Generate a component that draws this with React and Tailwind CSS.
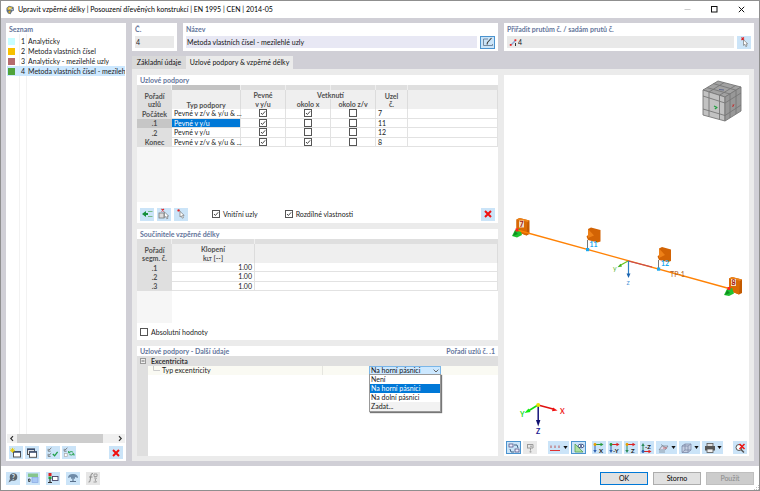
import React, { useState } from "react";

const FONT = "font-['Lato','Open_Sans',sans-serif]";

function Icon({ children, w = 14 }) {
  return (
    <svg viewBox={`0 0 ${w} 12`} width={w} height="12" className="block shrink-0" aria-hidden="true">
      {children}
    </svg>
  );
}

function Tool({ label, children, className = "w-[14px] bg-[#cbe4f8]", ...rest }) {
  return (
    <button
      type="button"
      aria-label={label}
      title={label}
      className={`flex h-[13px] shrink-0 items-center justify-center overflow-hidden ${className}`}
      {...rest}
    >
      {children}
    </button>
  );
}

const RedX = () => (
  <Icon>
    <path d="M4 3 L10 9 M10 3 L4 9" stroke="#f01010" strokeWidth="2" fill="none" />
  </Icon>
);

const Cursor = ({ x = 6, y = 4 }) => (
  <path
    transform={`translate(${x} ${y})`}
    d="M0 0 L0 5.6 L1.3 4.5 L2.3 6.8 L3.5 6.2 L2.5 4.1 L4.2 4 Z"
    fill="#fff"
    stroke="#777"
    strokeWidth=".7"
  />
);

function Caret() {
  return (
    <svg viewBox="0 0 5 3" width="5" height="3" className="block shrink-0" aria-hidden="true">
      <path d="M0.4 0 L4.6 0 L2.5 3 Z" fill="#111" />
    </svg>
  );
}

function Heading({ children, right }) {
  return (
    <div className="flex h-[10px] shrink-0 items-center justify-between px-[3px] font-bold leading-[10px] text-[#64759b]">
      <h2>{children}</h2>
      {right && <span>{right}</span>}
    </div>
  );
}

function Tick({ label, checked, onChange, hidden }) {
  return (
    <label className="inline-flex items-center gap-[3px] leading-[8px] text-[#222]">
      <input
        type="checkbox"
        checked={checked}
        onChange={onChange}
        aria-label={hidden ? label : undefined}
        className="peer sr-only"
      />
      <svg viewBox="0 0 8 8" width="8" height="8" className="block shrink-0" aria-hidden="true">
        <rect x=".5" y=".5" width="7" height="7" fill="#fff" stroke="#555" />
        {checked && <path d="M2 4 L3.4 5.5 L6.2 2.3" fill="none" stroke="#333" strokeWidth=".9" />}
      </svg>
      {!hidden && <span>{label}</span>}
    </label>
  );
}

const ENTRIES = [
  { n: 1, name: "Analyticky", color: "bg-[#c8fdff]" },
  { n: 2, name: "Metoda vlastních čísel", color: "bg-[#f7c000]" },
  { n: 3, name: "Analyticky - mezilehlé uzly", color: "bg-[#b56b6e]" },
  { n: 4, name: "Metoda vlastních čísel - mezilehlé uzly", color: "bg-[#4ea33c]" },
];

function ListPanel() {
  const [sel, setSel] = useState(4);
  return (
    <aside className="flex w-[120px] shrink-0 flex-col bg-white pt-px">
      <Heading>Seznam</Heading>
      <div className="flex-1 bg-[linear-gradient(#f2f2f2,#f2f2f2),linear-gradient(#f2f2f2,#f2f2f2)] bg-[length:1px_100%] bg-[position:13px_0,20px_0] bg-no-repeat px-px pt-[2px]">
        <ul>
          {ENTRIES.map((e) => (
            <li key={e.n}>
              <button
                type="button"
                onClick={() => setSel(e.n)}
                className={`flex h-[10px] w-full items-center overflow-hidden whitespace-nowrap text-left leading-[10px] ${
                  sel === e.n ? "bg-[#cce8ff]" : ""
                }`}
              >
                <span className={`ml-px h-[7px] w-[7px] shrink-0 ${e.color}`} />
                <span className="w-[10px] shrink-0 text-right">{e.n}</span>
                <span className="ml-[3px] overflow-hidden">{e.name}</span>
              </button>
            </li>
          ))}
        </ul>
      </div>
      <div className="mx-px flex h-[9px] items-center bg-[#f0f0f0]">
        <svg viewBox="0 0 10 9" width="10" height="9" className="block" aria-hidden="true">
          <path d="M6 2.2 L3.8 4.5 L6 6.8" fill="none" stroke="#333" strokeWidth="1.2" />
        </svg>
        <div className="h-[9px] w-[86px] bg-[#cdcdcd]" />
        <div className="flex-1" />
        <svg viewBox="0 0 10 9" width="10" height="9" className="block" aria-hidden="true">
          <path d="M4 2.2 L6.2 4.5 L4 6.8" fill="none" stroke="#333" strokeWidth="1.2" />
        </svg>
      </div>
      <div className="flex items-center px-[3px] pb-[2px] pt-[3px]">
        <Tool label="Nový">
          <Icon>
            <rect x="4.5" y="4.5" width="7" height="5.5" fill="#fff" stroke="#555" />
            <path d="M4 5 H12" stroke="#344a70" strokeWidth="1.4" />
            <path d="M3.5 .8 V5.8 M1 3.3 H6 M1.8 1.6 L5.2 5 M5.2 1.6 L1.8 5" stroke="#e6c900" strokeWidth=".9" />
          </Icon>
        </Tool>
        <Tool label="Kopírovat" className="ml-[2px] w-[14px] bg-[#cbe4f8]">
          <Icon>
            <rect x="2.5" y="2" width="7" height="5.5" fill="#eee" stroke="#555" />
            <path d="M2 2.4 H10" stroke="#344a70" strokeWidth="1.4" />
            <rect x="4.5" y="4.8" width="7" height="5.5" fill="#fff" stroke="#555" />
            <path d="M4 5 H12" stroke="#344a70" strokeWidth="1.4" />
          </Icon>
        </Tool>
        <Tool label="Vybrat vše" className="ml-[7px] w-[14px] bg-[#cbe4f8]">
          <Icon>
            <path d="M2.2 1.8 V4.2 H4.6 M3 3 L5.4 .8 M2.2 6.8 V9.4 H4.6 M3 8.2 L5.2 6.2" fill="none" stroke="#666" strokeWidth=".8" />
            <path d="M6.8 7 L8.6 8.8 L11.6 4.8" fill="none" stroke="#22a04a" strokeWidth="1.3" />
          </Icon>
        </Tool>
        <Tool label="Obrátit výběr" className="ml-[2px] w-[14px] bg-[#cbe4f8]">
          <Icon>
            <path d="M2.2 1.8 V4.2 H4.6 M3 3 L5.4 .8" fill="none" stroke="#666" strokeWidth=".8" />
            <rect x="2.4" y="6.6" width="2.8" height="2.8" fill="#fff" stroke="#aaa" strokeWidth=".7" />
            <path d="M6.6 5.6 Q8.8 3.6 11.2 5.2 M12 6.8 Q10 8.8 7.4 7.6 M6.6 4 V5.8 H8.4 M12 8.6 V6.8 H10.4" fill="none" stroke="#22a04a" strokeWidth=".9" />
          </Icon>
        </Tool>
        <div className="flex-1" />
        <Tool label="Smazat">
          <RedX />
        </Tool>
      </div>
    </aside>
  );
}

const HEAD = "border-r border-[#dcdcdc] bg-[#efefef] p-0 font-bold text-[#505050]";
const STUB = "bg-[#dfdfdf] p-0 text-center font-bold text-[#505050]";
const CELL = "border-b border-r border-[#e2e2e2] p-0 whitespace-nowrap";

const SUPPORTS = [
  { id: "Počátek", type: "Pevné v z/v & y/u & ...", c: [true, true, false], node: 7 },
  { id: ".1", type: "Pevné v y/u", c: [true, false, false], node: 11 },
  { id: ".2", type: "Pevné v y/u", c: [true, false, false], node: 12 },
  { id: "Konec", type: "Pevné v z/v & y/u & ...", c: [true, true, false], node: 8 },
];

function SupportsPanel() {
  const [rows, setRows] = useState(SUPPORTS);
  const [inner, setInner] = useState(true);
  const [diff, setDiff] = useState(true);
  const names = ["Pevné v y/u", "Vetknutí okolo x", "Vetknutí okolo z/v"];
  const toggle = (r, k) =>
    setRows(rows.map((row, i) => (i === r ? { ...row, c: row.c.map((v, j) => (j === k ? !v : v)) } : row)));
  return (
    <section className="flex h-[148px] shrink-0 flex-col bg-white">
      <Heading>Uzlové podpory</Heading>
      <table className="h-[62px] w-full table-fixed border-separate border-spacing-0 leading-[8px]">
        <colgroup>
          <col className="w-[35px]" />
          <col className="w-[69px]" />
          <col className="w-[45px]" />
          <col className="w-[45px]" />
          <col className="w-[45px]" />
          <col className="w-[32px]" />
          <col />
        </colgroup>
        <thead>
          <tr className="h-[5px]">
            <td className="h-[5px] border-r border-[#efefef] bg-[#dfdfdf] p-0" />
            <td className="border-r border-[#efefef] bg-[#c3c3c3] p-0" />
            <td className="border-r border-[#efefef] bg-[#dfdfdf] p-0" />
            <td className="border-r border-[#efefef] bg-[#dfdfdf] p-0" />
            <td className="border-r border-[#efefef] bg-[#dfdfdf] p-0" />
            <td className="border-r border-[#efefef] bg-[#dfdfdf] p-0" />
            <td className="bg-[#dfdfdf] p-0" />
          </tr>
          <tr className="h-[9px]">
            <th rowSpan={2} className={STUB}>Pořadí<br />uzlů</th>
            <th rowSpan={2} className={`${HEAD} align-bottom`}>Typ podpory</th>
            <th className={HEAD}>Pevné</th>
            <th colSpan={2} className={HEAD}>Vetknutí</th>
            <th rowSpan={2} className={HEAD}>Uzel<br />č.</th>
            <th rowSpan={2} className={HEAD} />
          </tr>
          <tr className="h-[10px]">
            <th className={HEAD}>v y/u</th>
            <th className={HEAD}>okolo x</th>
            <th className={HEAD}>okolo z/v</th>
          </tr>
        </thead>
        <tbody>
          {rows.map((r, i) => (
            <tr key={r.id}>
              <th className={i === 1 ? "bg-[#c6c6c6] p-0 font-bold text-[#505050]" : STUB}>{r.id}</th>
              <td className={`${CELL} ${i === 1 ? "bg-[#0078d7] text-white" : ""}`}>
                <div className="pl-[2px]">{r.type}</div>
              </td>
              {r.c.map((v, k) => (
                <td key={k} className={CELL}>
                  <div className="flex justify-center">
                    <Tick hidden label={`${names[k]} – ${r.id}`} checked={v} onChange={() => toggle(i, k)} />
                  </div>
                </td>
              ))}
              <td className={CELL}><div className="pl-[2px]">{r.node}</div></td>
              <td className={CELL} />
            </tr>
          ))}
        </tbody>
      </table>
      <div className="w-[35px] flex-1 bg-[#f6f6f6]" />
      <div className="flex h-[21px] shrink-0 items-center px-[3px] pt-[3px]">
        <Tool label="Vložit uzel">
          <Icon>
            <path d="M2 6 L6 3 V5 H8 V7 H6 V9 Z" fill="#16903c" />
            <path d="M8 3.5 H12.5 M8 8.5 H12.5" stroke="#79b98a" />
          </Icon>
        </Tool>
        <Tool label="Odebrat uzel" className="ml-[3px] w-[14px] bg-[#cbe4f8]">
          <Icon>
            <rect x="2" y="5" width="5" height="5" fill="#ddd" stroke="#777" strokeWidth=".8" />
            <path d="M4.5 .8 L7 3.3 M7 .8 L4.5 3.3" stroke="#e02020" strokeWidth="1.1" />
            <Cursor x={7.5} y={4} />
          </Icon>
        </Tool>
        <Tool label="Vybrat uzel" className="ml-[3px] w-[14px] bg-[#cbe4f8]">
          <Icon>
            <circle cx="4.6" cy="2.4" r="1.2" fill="#e02020" />
            <Cursor x={6} y={3.4} />
          </Icon>
        </Tool>
        <div className="ml-[24px] flex gap-[27px]">
          <Tick label="Vnitřní uzly" checked={inner} onChange={() => setInner(!inner)} />
          <Tick label="Rozdílné vlastnosti" checked={diff} onChange={() => setDiff(!diff)} />
        </div>
        <div className="flex-1" />
        <Tool label="Smazat">
          <RedX />
        </Tool>
      </div>
    </section>
  );
}

function FactorsPanel() {
  const [abs, setAbs] = useState(false);
  return (
    <section className="flex h-[111px] shrink-0 flex-col bg-white">
      <Heading>Součinitele vzpěrné délky</Heading>
      <table className="h-[52px] w-full table-fixed border-separate border-spacing-0 leading-[8px]">
        <colgroup>
          <col className="w-[35px]" />
          <col className="w-[83px]" />
          <col />
        </colgroup>
        <thead>
          <tr className="h-[5px]">
            <td className="h-[5px] border-r border-[#efefef] bg-[#dfdfdf] p-0" />
            <td className="border-r border-[#efefef] bg-[#dfdfdf] p-0" />
            <td className="bg-[#dfdfdf] p-0" />
          </tr>
          <tr className="h-[19px]">
            <th className={STUB}>Pořadí<br />segm. č.</th>
            <th className={HEAD}>
              <div className="h-[9px]">Klopení</div>
              <div>k<span className="text-[5px]">LT</span> [--]</div>
            </th>
            <th className={HEAD} />
          </tr>
        </thead>
        <tbody>
          {[".1", ".2", ".3"].map((id) => (
            <tr key={id}>
              <th className={STUB}>{id}</th>
              <td className={`${CELL} text-right`}><div className="pr-[2px]">1.00</div></td>
              <td className={CELL} />
            </tr>
          ))}
        </tbody>
      </table>
      <div className="w-[35px] flex-1 bg-[#f6f6f6]" />
      <div className="flex h-[17px] shrink-0 items-center px-[3px]">
        <Tick label="Absolutní hodnoty" checked={abs} onChange={() => setAbs(!abs)} />
      </div>
    </section>
  );
}

const OPTIONS = ["Není", "Na horní pásnici", "Na dolní pásnici", "Zadat..."];

function DetailsPanel() {
  const [value, setValue] = useState(OPTIONS[1]);
  return (
    <section className="flex min-h-[110px] flex-1 flex-col bg-white">
      <Heading right="Pořadí uzlů č. .1">Uzlové podpory - Další údaje</Heading>
      <div className="flex h-[10px] shrink-0 items-center gap-[5px] bg-[#dfdfdf] pl-[3px] font-bold leading-[9px] text-[#333]">
        <svg viewBox="0 0 6 6" width="6" height="6" className="block" aria-hidden="true">
          <rect x=".5" y=".5" width="5" height="5" fill="#eee" stroke="#999" />
          <path d="M1.5 3 H4.5" stroke="#444" strokeWidth=".8" />
        </svg>
        Excentricita
      </div>
      <div className="flex flex-1">
        <div className="w-[11px] bg-[#dfdfdf]" />
        <div className="flex-1">
          <div className="flex h-[9px] items-center bg-[#fafaf3]">
            <svg viewBox="0 0 14 9" width="14" height="9" className="block" aria-hidden="true">
              <path d="M5.5 0 V4.5 H12" fill="none" stroke="#ccc" />
            </svg>
            <label htmlFor="ecc" className="flex-1 leading-[9px]">Typ excentricity</label>
            <div className="relative h-[9px] w-[176px] shrink-0 border-l border-[#e6e6e0]">
              <select
                id="ecc"
                value={value}
                onChange={(e) => setValue(e.target.value)}
                className="ml-[46px] block h-[9px] w-[72px] appearance-none border border-[#7ab6e8] bg-[#cce8ff] pl-px leading-[7px] text-[#111]"
              >
                {OPTIONS.map((o) => (
                  <option key={o}>{o}</option>
                ))}
              </select>
              <svg viewBox="0 0 6 4" width="6" height="4" className="pointer-events-none absolute left-[110px] top-[3px] block" aria-hidden="true">
                <path d="M.6 .6 L3 3 L5.4 .6" fill="none" stroke="#555" strokeWidth=".9" />
              </svg>
              <ul
                role="listbox"
                aria-label="Typ excentricity"
                className="absolute left-[46px] top-[8px] z-10 w-[72px] border border-[#999] bg-white shadow-[1px_1px_1px_#777]"
              >
                {OPTIONS.map((o) => (
                  <li
                    key={o}
                    role="option"
                    aria-selected={o === value}
                    onClick={() => setValue(o)}
                    className={`h-[9px] pl-px leading-[9px] ${
                      o === value ? "bg-[#0078d7] text-white" : o === "Zadat..." ? "bg-[#f2f2f2]" : ""
                    }`}
                  >
                    {o}
                  </li>
                ))}
              </ul>
            </div>
          </div>
        </div>
      </div>
    </section>
  );
}

function SupportGlyph({ x, y }) {
  return (
    <g transform={`translate(${x} ${y})`}>
      <path d="M0 0 L3 -1.5 L13 1 V14.5 L10 16 L0 12 Z" fill="#c35a00" />
      <path d="M0 0 L11 2.5 L10 16 L0 12 Z" fill="#d96a04" />
      <path d="M0 0 L3 -1.5 L13 1 L11 2.5 Z" fill="#ef8418" />
    </g>
  );
}

function Cube() {
  return (
    <g stroke="#777" strokeWidth=".9" strokeLinejoin="round">
      <path d="M703 90 L718 81 L741 87 L725 97 Z" fill="#a2a2a2" />
      <path d="M703 90 L725 97 L725 121 L703 115 Z" fill="#c2c2c2" />
      <path d="M725 97 L741 87 L741 111 L725 121 Z" fill="#989898" />
      <g fill="none">
        <path d="M703 96 L725 103 L741 93 M703 109 L725 115.500 L741 105" />
        <path d="M709 92 V116.500 M719.500 95.200 V119.500 M730 94 V118 M736 90.200 V114" />
        <path d="M709 92 L724 82.600 M719.500 95.200 L735.500 85.500 M707 87.600 L730 94 M713.500 83.600 L736 90.200" />
      </g>
      <path d="M714 106 L717 107.500 L714.800 109" stroke="#22a040" strokeWidth="1.200" fill="none" />
      <path d="M732.500 105 L734 106 M734 104.200 L732.500 107" stroke="#c03030" fill="none" />
      <path d="M719 89.500 L724 90" stroke="#55608a" fill="none" />
    </g>
  );
}

function Scene() {
  return (
    <svg viewBox="504 75 245 364" className={`block min-h-0 w-full flex-1 ${FONT}`} role="img" aria-label="Model">
      <Cube />
      <SupportGlyph x={516.5} y={219.5} />
      <path d="M512 236 L515 230 L520 229 L522 235 L517 237.500 Z" fill="#1fc32f" />
      <path d="M515 231 L518 234 L513 236 Z" fill="#0f8f20" />
      <rect x="519" y="220.500" width="5" height="7" fill="#f3dcc0" />
      <path d="M517 230 L729 288.500" stroke="#ff8205" strokeWidth="1.300" />
      <path d="M587.500 240 V249" stroke="#777" />
      <path d="M588 229 L591 227.500 L600.500 230 V241.500 L597.500 242.500 L588 240 L586.500 236.500 L588 235 Z" fill="#d26304" />
      <path d="M588 229 L594 235.500 L588 238 Z" fill="#ee8118" />
      <path d="M658.500 260 V269" stroke="#777" />
      <path d="M659 248.500 L662 247 L671 249.500 V261 L668 262 L659 260 L657.500 256.500 L659 255 Z" fill="#d26304" />
      <path d="M659 248.500 L665 255 L659 258 Z" fill="#ee8118" />
      <SupportGlyph x={729} y={278.5} />
      <path d="M724 295 L727 289 L732 288 L734 293.500 L729 296 Z" fill="#1fc32f" />
      <path d="M727 290 L730 293 L725 295 Z" fill="#0f8f20" />
      <rect x="731" y="279" width="5" height="7" fill="#f3dcc0" />
      <rect x="515.500" y="228.500" width="3" height="3" fill="#f22" />
      <rect x="727.500" y="287" width="3" height="3" fill="#f22" />
      <rect x="586" y="248" width="3.200" height="3.200" fill="#1ba8f0" />
      <rect x="657" y="267.500" width="3.200" height="3.200" fill="#1ba8f0" />
      <path d="M628 261 L652 267" stroke="#c2475a" strokeWidth="1.100" />
      <path d="M628 261 L620 265.500" stroke="#63c21b" strokeWidth="1.200" />
      <path d="M617.500 267.200 L620.500 263.800 L622 266.400 Z" fill="#3fae18" />
      <path d="M628.500 261 V275" stroke="#2f7fc4" strokeWidth="1.200" />
      <path d="M626.500 273.500 H630.500 L628.500 278 Z" fill="#1b64b0" />
      <g fontSize="7">
        <text x="519.500" y="226.500" fill="#a01010" fontWeight="700">7</text>
        <text x="731.500" y="285" fill="#a01010" fontWeight="700">8</text>
        <text x="589.500" y="246.500" fill="#1ba8f0" fontWeight="700">11</text>
        <text x="661" y="266" fill="#1ba8f0" fontWeight="700">12</text>
        <text x="670" y="276.500" fill="#b06020">TP-1</text>
        <text x="613" y="271" fill="#55b528">y</text>
        <text x="626.500" y="285" fill="#4b96d8">z</text>
      </g>
      <path d="M538 405 L529 410.500" stroke="#10dd10" strokeWidth="1.500" />
      <path d="M524.500 413 L528.500 408.500 L530.500 412 Z" fill="#10ee10" />
      <path d="M538 405 L553 409" stroke="#e01010" strokeWidth="1.500" />
      <path d="M557.500 410.600 L552 411.200 L553 407.400 Z" fill="#f01010" />
      <path d="M538.200 405 V421" stroke="#15157a" strokeWidth="1.500" />
      <path d="M536 420 H540.400 L538.200 426.500 Z" fill="#101070" />
      <circle cx="538.200" cy="405" r="2" fill="#e8e000" />
      <g fontSize="7" fontWeight="700">
        <text x="520" y="417" fill="#20e020">Y</text>
        <text x="560" y="414" fill="#f02020">X</text>
        <text x="536" y="434" fill="#202090">Z</text>
      </g>
    </svg>
  );
}

function AxisIcon({ letter, down = true, dot = "#e8a000", bar = "#d22", stem = "#2a8a5a" }) {
  return (
    <Icon>
      <path d={down ? "M3 2.5 H10" : "M3 9.500 H10"} stroke={bar} />
      <path d={down ? "M8.500 .8 L11.500 2.500 L8.500 4.200 Z" : "M8.500 7.800 L11.500 9.500 L8.500 11.200 Z"} fill={bar} />
      <path d={down ? "M3 2.500 V9" : "M3 3 V9.500"} stroke={stem} />
      <path d={down ? "M1.300 8 L4.700 8 L3 11 Z" : "M1.300 4 L4.700 4 L3 1 Z"} fill={stem} />
      <circle cx="3" cy={down ? 2.5 : 9.5} r="1.400" fill={dot} />
      <text x={letter.length > 1 ? 5 : 7} y={down ? 10.5 : 6.5} fontSize="6" fontWeight="700" fill="#222">{letter}</text>
    </Icon>
  );
}

const BLUE14 = "w-[14px] bg-[#cbe4f8]";
const DROP = "w-[21px] gap-px bg-[#cbe4f8] pr-px";

function Viewport() {
  return (
    <section className="flex w-[245px] shrink-0 flex-col bg-white">
      <Scene />
      <div className="flex h-[17px] shrink-0 items-center px-[2px]">
        <Tool label="Číslování" className="w-[15px] border border-[#4b93cf] bg-[#cbe4f8]">
          <Icon>
            <rect x="2" y="2" width="4" height="3" fill="#eef" stroke="#447" strokeWidth=".7" />
            <path d="M7 3 L10 3 L11 6 M3 7 L4 10 L7 10" fill="none" stroke="#357" strokeWidth=".9" />
            <rect x="8" y="7" width="4" height="3" fill="#eef" stroke="#447" strokeWidth=".7" />
          </Icon>
        </Tool>
        <Tool label="Zobrazit" className="ml-[2px] w-[14px] bg-[#e9e9e9]">
          <Icon>
            <path d="M4 2.500 H10 V6 H5 M7 4.200 H9 M7.500 6 V8.500 M4.500 2 V6.500" fill="none" stroke="#9a9a9a" strokeWidth="1" />
            <circle cx="7.500" cy="9.800" r="1" fill="#aaa" />
          </Icon>
        </Tool>
        <Tool label="Hodnoty" className="ml-[11px] w-[21px] gap-[2px] bg-[#cbe4f8]">
          <Icon w={12}>
            <path d="M1 8.500 H11" stroke="#d33" />
            <path d="M2 3.500 V6 M6 3.500 V6 M10 3.500 V6" stroke="#b55" />
          </Icon>
          <Caret />
        </Tool>
        <Tool label="Stínování" className="ml-[2px] w-[15px] border border-[#4b93cf] bg-[#cbe4f8]">
          <Icon>
            <path d="M3 2 V10 H11 Z" fill="#aee0a0" stroke="#55a055" strokeWidth=".8" />
            <ellipse cx="9" cy="4" rx="3" ry="1.800" fill="#fff" stroke="#334a80" strokeWidth=".9" />
            <circle cx="9" cy="4" r="1" fill="#334a80" />
          </Icon>
        </Tool>
        <div className="ml-[6px] flex gap-[2px]">
          <Tool label="Pohled X" className={BLUE14}><AxisIcon letter="X" bar="#2a9a3a" stem="#2c5fb0" /></Tool>
          <Tool label="Pohled -Y" className={BLUE14}><AxisIcon letter="-Y" dot="#2a9a3a" stem="#2c5fb0" /></Tool>
          <Tool label="Pohled Z" className={BLUE14}><AxisIcon letter="Z" /></Tool>
          <Tool label="Pohled -Z" className={BLUE14}><AxisIcon letter="-Z" down={false} dot="#2c5fb0" /></Tool>
          <Tool label="Rovina" className={DROP}>
            <Icon w={13}>
              <path d="M2 8 L5 4 H11 L8 8 Z M2 10 H8 M4 2.500 L9 6" fill="#dde" stroke="#7d8896" strokeWidth=".8" />
              <path d="M6 6 H10" stroke="#c55" strokeWidth=".8" />
            </Icon>
            <Caret />
          </Tool>
          <Tool label="Kvádr" className={DROP}>
            <Icon w={13}>
              <path d="M2 4 L5 2 H11 V8 L8 10.500 H2 Z M2 4 H8 V10.500 M8 4 L11 2 M5 2 V8 M5 8 H11 M5 8 L2 10.500" fill="#c5cfe2" stroke="#7d8aa8" strokeWidth=".8" />
            </Icon>
            <Caret />
          </Tool>
          <Tool label="Tisk" className={DROP}>
            <Icon w={13}>
              <rect x="4" y="1.500" width="6" height="3" fill="#ddd" stroke="#555" strokeWidth=".8" />
              <rect x="2" y="4" width="10" height="4.500" fill="#555" />
              <rect x="4" y="7" width="6" height="3.500" fill="#eee" stroke="#555" strokeWidth=".8" />
            </Icon>
            <Caret />
          </Tool>
        </div>
        <Tool label="Zrušit" className="ml-auto w-[14px] bg-[#cbe4f8]">
          <Icon>
            <circle cx="6" cy="5.500" r="3" fill="#fff" stroke="#555" />
            <path d="M8 7.500 L11 10.500" stroke="#555" strokeWidth="1.500" />
            <path d="M6.500 2 L11.500 7 M11.500 2 L6.500 7" stroke="#ee1515" strokeWidth="1.500" />
          </Icon>
        </Tool>
      </div>
    </section>
  );
}

function TitleBar() {
  return (
    <header className="flex h-[17px] shrink-0 items-center bg-white pl-[4px] pr-[4px] text-black">
      <svg viewBox="0 0 10 10" width="10" height="10" className="mr-[3px] block" aria-hidden="true">
        <path d="M1.500 3 L4 .8 L8.500 2 L9 5.500 L7 6.500 L5.500 9.300 L3 8.500 L1.500 6 Z" fill="#5c6f86" />
        <path d="M2.200 3.200 L4.300 1.600 L7.500 2.500 L6 4.500 L3 5 Z" fill="#e4bd32" />
        <path d="M3.500 6 L5.800 5.500 L5 8.500 L3.600 7.900 Z" fill="#d9aa25" />
        <path d="M4 3 L8 5" stroke="#dfe6ee" strokeWidth=".8" />
      </svg>
      <h1 className="flex-1 truncate">Upravit vzpěrné délky | Posouzení dřevěných konstrukcí | EN 1995 | CEN | 2014-05</h1>
      <button type="button" aria-label="Minimalizovat" className="flex w-[27px] justify-center">
        <svg viewBox="0 0 7 7" width="7" height="7"><path d="M.5 3.500 H6.500" stroke="#ccc" /></svg>
      </button>
      <button type="button" aria-label="Maximalizovat" className="flex w-[27px] justify-center">
        <svg viewBox="0 0 7 7" width="7" height="7"><rect x=".5" y=".5" width="5.500" height="5.500" fill="none" stroke="#111" /></svg>
      </button>
      <button type="button" aria-label="Zavřít" className="flex w-[27px] justify-center">
        <svg viewBox="0 0 7 7" width="7" height="7"><path d="M.8 .8 L6.200 6.200 M6.200 .8 L.8 6.200" stroke="#111" /></svg>
      </button>
    </header>
  );
}

function TopFields() {
  return (
    <div className="flex h-[28px] shrink-0 gap-[6px]">
      <div className="w-[45px] shrink-0 bg-white">
        <div className="px-[3px] pt-px font-bold leading-[10px] text-[#64759b]"><label htmlFor="no">Č.</label></div>
        <input id="no" readOnly value="4" className="mx-[3px] mt-[2px] block h-[12px] w-[39px] bg-[#e9e9e9] px-px text-[#222]" />
      </div>
      <div className="min-w-0 flex-1 bg-white">
        <div className="px-[3px] pt-px font-bold leading-[10px] text-[#64759b]"><label htmlFor="name">Název</label></div>
        <div className="mt-[2px] flex h-[12px] items-center gap-[3px] px-[3px]">
          <input
            id="name"
            defaultValue="Metoda vlastních čísel - mezilehlé uzly"
            className="block h-[12px] min-w-0 flex-1 bg-[#e8e8f4] px-px text-[#111]"
          />
          <Tool label="Upravit název" className="w-[15px] border border-[#4b93cf] bg-[#cbe4f8]">
            <Icon>
              <path d="M7 3 H2.500 V9.500 H11.500 V8" fill="none" stroke="#6a8098" strokeWidth=".9" />
              <path d="M6 8.500 L6.500 6.500 L10.500 2" fill="none" stroke="#444" strokeWidth="1.100" />
            </Icon>
          </Tool>
        </div>
      </div>
      <div className="w-[250px] shrink-0 bg-white">
        <div className="px-[3px] pt-px font-bold leading-[10px] text-[#64759b]">
          <label htmlFor="assign">Přiřadit prutům č. / sadám prutů č.</label>
        </div>
        <div className="mt-[2px] flex h-[12px] items-center gap-[3px] px-[3px]">
          <div className="flex h-[12px] min-w-0 flex-1 items-center bg-[#e9e9e9] pl-[2px]">
            <svg viewBox="0 0 9 9" width="9" height="9" className="block shrink-0" aria-hidden="true">
              <path d="M2 7 L6.500 2.500" stroke="#8fa9d8" strokeWidth="1.500" />
              <rect x=".8" y="6" width="1.800" height="1.800" fill="#e22" />
              <rect x="5.500" y="1.300" width="1.800" height="1.800" fill="#e22" />
              <path d="M6.500 5 V8" stroke="#333" />
            </svg>
            <input id="assign" defaultValue="4" className="block h-[12px] min-w-0 flex-1 bg-transparent text-[#111]" />
          </div>
          <Tool label="Vybrat pruty">
            <Icon>
              <path d="M4.500 1.500 L7 4 M7 1.500 L4.500 4" stroke="#e02020" strokeWidth="1.100" />
              <Cursor x={6.5} y={3.8} />
            </Icon>
          </Tool>
        </div>
      </div>
    </div>
  );
}

function Footer() {
  return (
    <footer className="relative flex h-[24px] shrink-0 items-center bg-white pl-[5px] pr-[5px]">
      <div className="flex gap-[6px]">
        <Tool label="Nápověda">
          <Icon>
            <circle cx="7.500" cy="5" r="3.800" fill="#59636e" />
            <path d="M4 7 L2.500 10.500 L6 8.500" fill="#59636e" />
            <text x="5.700" y="7.600" fontSize="7" fontWeight="700" fill="#dcebf7">?</text>
          </Icon>
        </Tool>
        <Tool label="Jednotky">
          <Icon>
            <rect x="2" y="1.500" width="10" height="3.500" fill="#86c58c" />
            <rect x="6" y="5.500" width="6" height="5" fill="#a8c8f4" stroke="#7f9fe0" strokeWidth=".6" />
            <path d="M2.500 7 V9.500 H4 V7 Z" fill="none" stroke="#333" strokeWidth=".8" />
          </Icon>
        </Tool>
        <Tool label="Zobrazení">
          <Icon>
            <rect x="2.500" y="1" width="3" height="3" fill="#d22" />
            <rect x="2.500" y="4.500" width="3" height="2.500" fill="#2a9a3a" />
            <path d="M4 7 V10.500 M2 10.500 H6" stroke="#333" strokeWidth="1.200" />
            <rect x="6.500" y="4.500" width="5.500" height="4" fill="#fff" stroke="#446" strokeWidth=".9" />
          </Icon>
        </Tool>
        <Tool label="Nastavení">
          <Icon>
            <path d="M2 6 Q2 2 7 2 Q12 2 12 6 L9 5 V7 L7 6 L5 7 V5 Z" fill="#6f8ba8" />
            <path d="M4 9.500 H10 M7 6 V9.500" stroke="#58708c" strokeWidth="1.100" />
          </Icon>
        </Tool>
        <Tool label="Vzorce" disabled className="w-[14px] bg-[#e6e6e6]">
          <Icon>
            <path d="M7 1.500 Q5 1 4.800 4 L4 9 Q3.800 10.500 2.500 10 M3 5 H6.500" fill="none" stroke="#8c8c8c" />
            <path d="M8 2 H11 V4.500 H8 Z M8 6 H10.500 L9 8 L10.500 10 H7.500" fill="none" stroke="#9a9a9a" strokeWidth=".9" />
          </Icon>
        </Tool>
      </div>
      <div className="ml-auto flex gap-[5px]">
        <button type="button" className="h-[13px] w-[48px] border border-[#0078d7] bg-[#e1e1e1] leading-[10px] text-black">OK</button>
        <button type="button" className="h-[13px] w-[48px] border border-[#adadad] bg-[#e1e1e1] leading-[10px] text-black">Storno</button>
        <button type="button" disabled className="h-[13px] w-[48px] border border-[#bfbfbf] bg-[#cccccc] leading-[10px] text-[#8a8a8a]">Použít</button>
      </div>
      <svg viewBox="0 0 5 5" width="5" height="5" className="absolute bottom-0 right-0 block" aria-hidden="true">
        <path d="M4 0 h1 v1 h-1 Z M2 2 h1 v1 h-1 Z M4 2 h1 v1 h-1 Z M0 4 h1 v1 h-1 Z M2 4 h1 v1 h-1 Z M4 4 h1 v1 h-1 Z" fill="#bdbdbd" />
      </svg>
    </footer>
  );
}

export default function App() {
  return (
    <div className={`flex h-screen min-h-[480px] flex-col border border-[#8f8f8f] bg-[#d0cfd6] text-[7px] leading-[9px] text-[#1a1a1a] ${FONT}`}>
      <TitleBar />
      <main className="flex min-h-0 flex-1 gap-[6px] p-[5px]">
        <ListPanel />
        <div className="flex min-w-0 flex-1 flex-col">
          <TopFields />
          <div role="tablist" className="mt-[5px] flex h-[13px] shrink-0 whitespace-nowrap text-[#111]">
            <button type="button" role="tab" aria-selected="false" className="w-[54px] bg-[#d9d9d9]">Základní údaje</button>
            <button type="button" role="tab" aria-selected="true" className="w-[107px] bg-[#ebebeb]">Uzlové podpory &amp; vzpěrné délky</button>
          </div>
          <div className="flex min-h-0 flex-1 gap-[6px] bg-[#ebebeb] p-[5px] pt-[6px]">
            <div className="flex min-w-0 flex-1 flex-col gap-[6px]">
              <SupportsPanel />
              <FactorsPanel />
              <DetailsPanel />
            </div>
            <Viewport />
          </div>
        </div>
      </main>
      <Footer />
    </div>
  );
}
